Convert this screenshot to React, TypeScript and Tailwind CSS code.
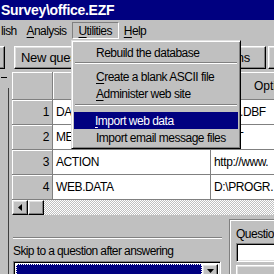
const RAISED =
  'bg-[#c0c0c0] border border-t-white border-l-white border-r-black border-b-black shadow-[inset_-1px_-1px_#808080,inset_1px_1px_#dfdfdf]';
const SUNKEN =
  'border border-t-[#808080] border-l-[#808080] border-r-white border-b-white shadow-[inset_1px_1px_#000,inset_-1px_-1px_#dfdfdf]';
const CELL_HEAD =
  'bg-[#c0c0c0] border-r border-b border-r-[#808080] border-b-[#808080] shadow-[inset_1px_1px_#fff]';

const ROWS = [
  { n: 1, name: 'DATABASE', opt: 'office.DBF' },
  { n: 2, name: 'MESSAGE', opt: 'TEXT' },
  { n: 3, name: 'ACTION', opt: 'http://www.' },
  { n: 4, name: 'WEB.DATA', opt: 'D:\\PROGR.' },
];

function U({ children }: { children: string }) {
  return <span className="underline underline-offset-[2px]">{children}</span>;
}

function Sep({ h, pt }: { h: string; pt: string }) {
  return (
    <div className={`${h} ${pt} px-[1px]`}>
      <div className="border-t border-t-[#808080] border-b border-b-white" />
    </div>
  );
}

function Menu() {
  return (
    <div className="absolute left-[71px] top-[40px] w-[170px] h-[109px] bg-[#c0c0c0] border border-t-[#dfdfdf] border-l-[#dfdfdf] border-r-black border-b-black shadow-[inset_1px_1px_#fff,inset_-1px_-1px_#808080] px-[2px] pt-[3px] text-[12px] tracking-[-0.5px] leading-[16px] whitespace-nowrap">
      <div className="h-[17px] pt-[1px] pl-[22px]">Rebuild the database</div>
      <Sep h="h-[7px]" pt="pt-[1px]" />
      <div className="h-[17px] pt-[1px] pl-[22px]">
        <U>C</U>reate a blank ASCII file
      </div>
      <div className="h-[17px] pt-[1px] pl-[22px]">
        <U>A</U>dminister web site
      </div>
      <Sep h="h-[10px]" pt="pt-[2px]" />
      <div className="h-[17px] pt-[1px] pl-[21px] bg-[#000080] text-white">
        <U>I</U>mport web data
      </div>
      <div className="h-[17px] pt-[1px] pl-[22px]">Import email message files</div>
    </div>
  );
}

function Grid() {
  return (
    <div className="flex flex-col">
      <div className="flex h-[28px]">
        <div className={`w-[41px] shrink-0 ${CELL_HEAD}`} />
        <div className={`w-[158px] shrink-0 ${CELL_HEAD} flex items-center justify-center text-[12px]`}>Name</div>
        <div className={`w-[120px] shrink-0 ${CELL_HEAD} flex items-center pl-[43px] text-[12px] whitespace-nowrap`}>Options file</div>
      </div>
      {ROWS.map((r) => (
        <div key={r.n} className="flex h-[25px] text-[12px] tracking-[-0.4px]">
          <div className={`w-[41px] shrink-0 ${CELL_HEAD} flex items-center justify-end pr-[3px]`}>{r.n}</div>
          <div className="w-[158px] shrink-0 bg-white border-r border-b border-[#808080] flex items-center pl-[3px] overflow-hidden whitespace-nowrap">
            {r.name}
          </div>
          <div className="w-[120px] shrink-0 bg-white border-b border-[#808080] flex items-center pl-[3px] overflow-hidden whitespace-nowrap">
            {r.opt}
          </div>
        </div>
      ))}
      <div className="flex h-[15px]">
        <div className={`w-[16px] h-[15px] ${RAISED} flex items-center justify-center`}>
          <svg width="4" height="7" viewBox="0 0 4 7">
            <path d="M4 0v7L0 3.5z" fill="#000" />
          </svg>
        </div>
        <div className={`w-[16px] h-[15px] ${RAISED}`} />
        <div className="flex-1 bg-[repeating-conic-gradient(#c0c0c0_0_25%,#fff_0_50%)] bg-[length:2px_2px]" />
      </div>
    </div>
  );
}

export default function App() {
  return (
    <div className="relative w-[274px] h-[274px] overflow-hidden bg-[#c0c0c0] font-['Liberation_Sans',Arial,sans-serif] text-black">
      {/* title bar */}
      <div className="h-[20px] bg-[#000080] flex items-center">
        <span className="pl-[1px] text-white font-bold text-[14px] tracking-[-0.3px] leading-none">
          Survey\office.EZF
        </span>
      </div>

      {/* menu bar */}
      <div className="h-[21px] flex items-center text-[12px] tracking-[-0.6px] whitespace-nowrap">
        <span className="pl-[1px]">lish</span>
        <span className="ml-[10px]">
          <U>A</U>nalysis
        </span>
        <div className="ml-[5px] h-[17px] px-[6px] flex items-center border border-t-[#808080] border-l-[#808080] border-r-white border-b-white">
          <span>
            <U>U</U>tilities
          </span>
        </div>
        <span className="ml-[5px]">
          <U>H</U>elp
        </span>
      </div>

      {/* toolbar */}
      <div className="h-[30px] flex items-start pt-[5px] text-[13px] tracking-[-0.3px] whitespace-nowrap">
        <div className={`w-[25px] h-[23px] -ml-[20px] shrink-0 ${RAISED}`} />
        <div className={`w-[106px] h-[23px] ml-[9px] shrink-0 ${RAISED} flex items-center pl-[6px]`}>
          New question
        </div>
        <div className={`w-[142px] h-[23px] ml-[4px] shrink-0 ${RAISED} flex items-center justify-end pr-[15px]`}>
          Question options
        </div>
        <div className={`w-[40px] h-[23px] ml-[2px] shrink-0 ${RAISED}`} />
      </div>

      {/* main area */}
      <div className="flex h-[203px] pt-[1px]">
        <div className="w-[12px] shrink-0 flex flex-col">
          <div className="h-[16px] pl-[1px] pt-[5px]">
            <div className="w-[6px] h-[1px] bg-black" />
          </div>
          <div className="flex-1 w-[9px] border-r border-r-[#404040]" />
        </div>
        <div className="flex-1 flex flex-col min-w-0">
          <Grid />
          <div className="flex flex-1">
            <div className="w-[217px] shrink-0 flex flex-col">
              <div className="mt-[22px] ml-[1px] w-[209px] border-t border-t-[#808080] border-b border-b-white" />
              <div className="mt-[5px] text-[12px] tracking-[-0.6px] leading-[14px] pl-[1px] whitespace-nowrap">
                Skip to a question after answering
              </div>
              <div className={`mt-[3px] ml-[1px] w-[208px] h-[20px] bg-white ${SUNKEN} flex p-[2px]`}>
                <div className="flex-1 bg-[#000080] border border-dotted border-white" />
                <div className={`w-[16px] ${RAISED} flex items-center justify-center`}>
                  <svg width="7" height="4" viewBox="0 0 7 4">
                    <path d="M0 0h7L3.5 4z" fill="#000" />
                  </svg>
                </div>
              </div>
            </div>
            <div className="flex-1 mt-[4px] border-l border-t border-[#808080] shadow-[inset_1px_1px_#fff] pl-[6px] pt-[7px]">
              <div className="text-[12px] tracking-[-0.5px] leading-[14px] whitespace-nowrap">Question</div>
              <div className={`mt-[2px] h-[19px] bg-white ${SUNKEN}`} />
              <div className={`mt-[3px] h-[20px] ${RAISED} flex items-start justify-center pt-[3px] text-[12px]`}>
                &lt;--
              </div>
            </div>
          </div>
        </div>
      </div>

      <Menu />
    </div>
  );
}
